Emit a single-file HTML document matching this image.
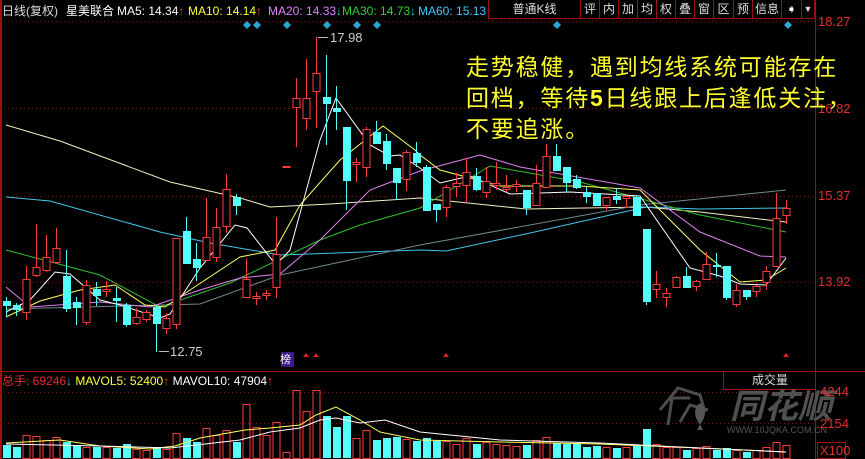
<!DOCTYPE html>
<html><head><meta charset="utf-8">
<style>
html,body{margin:0;padding:0;background:#000;width:865px;height:459px;overflow:hidden}
#s{position:absolute;left:0;top:0}
.t{position:absolute;font-family:"Liberation Sans","Noto Sans CJK SC",sans-serif;font-size:12px;white-space:nowrap;line-height:14px}
.btn{position:absolute;top:0;height:19px;border:1px solid #a01010;border-top:none;color:#ddd;font-family:"Liberation Sans","Noto Sans CJK SC",sans-serif;font-size:12px;text-align:center;line-height:19px;box-sizing:border-box}
.note{position:absolute;left:466px;color:#ffff30;font-family:"Liberation Sans","Noto Sans CJK SC",sans-serif;font-size:23px;letter-spacing:1.8px;white-space:nowrap;line-height:31px}
.ax{position:absolute;color:#e03030;font-family:"Liberation Sans",sans-serif;font-size:13px}
</style></head><body>
<svg id="s" width="865" height="459" xmlns="http://www.w3.org/2000/svg">
<rect width="865" height="459" fill="#000"/>
<line x1="1" y1="0" x2="1" y2="459" stroke="#a01010" stroke-width="2"/>
<line x1="815.5" y1="0" x2="815.5" y2="459" stroke="#a01010"/>
<line x1="0" y1="21.5" x2="815" y2="21.5" stroke="#8a1010" stroke-dasharray="1,3"/>
<g stroke="#8a1010" stroke-dasharray="1,3">
<line x1="0" y1="108.5" x2="815" y2="108.5"/>
<line x1="0" y1="196.5" x2="815" y2="196.5"/>
<line x1="0" y1="282.5" x2="815" y2="282.5"/>
<line x1="0" y1="392.5" x2="815" y2="392.5"/>
<line x1="0" y1="423.5" x2="815" y2="423.5"/>
</g>
<line x1="0" y1="371.5" x2="865" y2="371.5" stroke="#a01010"/>
<rect x="723.5" y="371.5" width="92" height="18" fill="none" stroke="#a01010"/>
<rect x="817.5" y="442.5" width="28" height="16" fill="none" stroke="#a01010"/>
<!-- watermark -->
<g fill="none" stroke="#555" stroke-width="3" opacity="0.9">
<path d="M660 410 L678 388 L700 395 L705 412"/>
<path d="M668 425 L672 398 L690 398"/>
<path d="M680 422 L690 405 L708 410"/>
</g>
<path d="M700 425 q-10 -14 0 -22 q10 8 0 22 z M697 430 h6 l-3 -6z" fill="#555"/>
<text x="730" y="418" font-family="Liberation Sans,Noto Sans CJK SC,sans-serif" font-size="34" font-style="italic" font-weight="bold" fill="#505050">同花顺</text>
<text x="727" y="433" font-family="Liberation Sans,sans-serif" font-size="9" fill="#555">WWW.10JQKA.COM.CN</text>
<g id="ma" fill="none" stroke-width="1"></g>
<g id="cd"></g>
<g id="vol"></g>
<g id="vma" fill="none"></g>
<!-- diamonds -->
<g fill="#2aa8d8" id="dm"></g>
<!-- triangles -->
<g fill="#e02020">
<path d="M303 357 l3 -4 l3 4z"/><path d="M313 357 l3 -4 l3 4z"/><path d="M443 357 l3 -4 l3 4z"/><path d="M783 357 l3 -4 l3 4z"/>
</g>
<rect x="281" y="352" width="13" height="15" fill="#3a1a8a"/>
<line x1="157.5" y1="352" x2="157.5" y2="352" stroke="#aaa"/>
<line x1="159" y1="351.5" x2="169" y2="351.5" stroke="#bbb"/>
<line x1="318" y1="37.5" x2="328" y2="37.5" stroke="#bbb"/>
</svg>
<div class="t" style="left:280px;top:353px;color:#fff;font-size:11px">榜</div>
<div class="t" style="left:170px;top:345px;color:#ccc;font-size:13px">12.75</div>
<div class="t" style="left:330px;top:31px;color:#ccc;font-size:13px">17.98</div>

<div class="t" style="left:2px;top:4px;color:#ddd">日线(复权)</div>
<div class="t" style="left:66px;top:4px;color:#fff">星美联合</div>
<div class="t" style="left:117px;top:4px;color:#fff">MA5: 14.34<span style="color:#f33">↑</span></div>
<div class="t" style="left:188px;top:4px;color:#ffff40">MA10: 14.14<span style="color:#f33">↑</span></div>
<div class="t" style="left:268px;top:4px;color:#e080ff">MA20: 14.33<span style="color:#3cc">↓</span></div>
<div class="t" style="left:342px;top:4px;color:#30d030">MA30: 14.73<span style="color:#3cc">↓</span></div>
<div class="t" style="left:418px;top:4px;color:#40c8ff">MA60: 15.13<span style="color:#f33">↑</span></div>

<div class="btn" style="left:488px;width:93px">普通K线</div>
<div class="btn" style="left:580px;width:20px">评</div>
<div class="btn" style="left:599px;width:20px">内</div>
<div class="btn" style="left:618px;width:20px">加</div>
<div class="btn" style="left:637px;width:20px">均</div>
<div class="btn" style="left:656px;width:20px">权</div>
<div class="btn" style="left:675px;width:20px">叠</div>
<div class="btn" style="left:694px;width:20px">窗</div>
<div class="btn" style="left:713px;width:21px">区</div>
<div class="btn" style="left:733px;width:20px">预</div>
<div class="btn" style="left:752px;width:30px">信息</div>
<div class="btn" style="left:781px;width:21px;color:#fff">➧</div>
<div class="btn" style="left:801px;width:14px;border-left:1px solid #a01010;font-size:9px">▼</div>

<div class="ax" style="left:818px;top:14px">18.27</div>
<div class="ax" style="left:818px;top:101px">16.82</div>
<div class="ax" style="left:818px;top:188px">15.37</div>
<div class="ax" style="left:818px;top:274px">13.92</div>
<div class="ax" style="left:820px;top:384px">4244</div>
<div class="ax" style="left:820px;top:416px">2154</div>
<div class="ax" style="left:820px;top:443px">X100</div>

<div class="note" style="top:52px">走势稳健，遇到均线系统可能存在</div>
<div class="note" style="top:83px">回档，等待<b>5</b>日线跟上后逢低关注，</div>
<div class="note" style="top:114px">不要追涨。</div>

<div class="t" style="left:2px;top:374px;color:#e03030">总手: 69246<span style="color:#3cc">↓</span> <span style="color:#ffff40">MAVOL5: 52400</span><span style="color:#f33">↑</span> <span style="color:#fff">MAVOL10: 47904</span><span style="color:#f33">↑</span></div>
<div class="t" style="left:752px;top:373px;color:#ddd">成交量</div>

<script>
var NS="http://www.w3.org/2000/svg";
function el(p,n,a){var e=document.createElementNS(NS,n);for(var k in a)e.setAttribute(k,a[k]);p.appendChild(e);return e;}
var C=[[6,301,305,297,317,'c'],[16,305,309,303,316,'c'],[26,279,312,266,320,'r'],[36,267,275,224,277,'r'],[46,257,270,235,272,'r'],[56,248,262,228,264,'r'],[66,276,308,250,312,'c'],[76,302,307,297,325,'c'],[86,285,322,280,325,'r'],[96,289,295,282,306,'c'],[106,289,291,281,297,'r'],[116,298,300,287,322,'c'],[126,305,324,303,327,'c'],[136,317,323,308,325,'r'],[146,312,319,310,322,'r'],[156,307,323,305,352,'c'],[166,318,328,313,334,'r'],[176,238,324,238,329,'r'],[186,231,263,217,263,'c'],[196,259,267,243,281,'c'],[206,237,260,198,260,'r'],[216,227,257,208,262,'r'],[226,189,226,174,233,'r'],[236,197,205,194,215,'c'],[246,279,297,259,297,'r'],[256,296,298,292,305,'r'],[266,293,295,290,300,'r'],[276,254,287,217,298,'r'],[286,166,167,166,167,'r'],[296,98,107,78,147,'r'],[306,98,118,59,130,'r'],[316,73,91,37,128,'r'],[326,97,103,55,145,'c'],[336,108,111,86,130,'c'],[346,127,180,127,210,'c'],[356,162,164,158,182,'r'],[366,129,167,127,177,'r'],[376,132,143,121,143,'c'],[386,141,163,134,170,'c'],[396,168,182,168,200,'c'],[406,152,179,150,191,'r'],[416,153,162,142,167,'c'],[426,167,210,165,210,'c'],[436,204,209,204,222,'c'],[446,187,207,185,217,'r'],[456,183,186,173,197,'r'],[466,172,185,158,202,'r'],[476,176,189,168,191,'c'],[486,181,192,167,198,'r'],[496,183,185,162,190,'r'],[506,187,189,175,192,'r'],[516,184,186,180,192,'r'],[526,190,207,190,215,'c'],[536,183,205,165,205,'r'],[546,156,187,144,187,'r'],[556,156,170,144,170,'c'],[566,167,182,167,192,'c'],[576,179,187,175,189,'c'],[586,192,196,187,203,'c'],[596,193,205,193,205,'c'],[606,197,205,197,210,'r'],[616,196,199,188,204,'c'],[626,196,198,195,208,'r'],[636,197,215,195,215,'c'],[646,229,301,229,305,'c'],[656,284,289,271,298,'r'],[666,293,297,288,307,'r'],[676,277,287,276,287,'r'],[686,276,287,267,288,'c'],[696,281,286,280,291,'r'],[706,264,279,252,280,'r'],[716,265,266,253,277,'c'],[726,266,297,266,300,'c'],[736,290,304,284,307,'r'],[746,290,296,290,300,'c'],[756,286,291,285,297,'r'],[766,271,282,266,290,'r'],[776,218,266,193,266,'r'],[786,208,215,200,224,'r']];
var V=[13,11,23,22,18,21,16,12,11,11,11,10,14,9,8,11,9,25,20,16,30,23,28,16,54,31,23,36,6,68,47,68,42,31,42,20,28,18,20,21,19,17,20,17,17,14,20,14,16,14,13,12,13,18,21,15,14,14,11,12,11,10,11,12,29,14,11,11,8,10,12,8,10,8,6,8,11,16,13];
var RED="#ff3a3a",CY="#54fcfc";
var cd=document.getElementById('cd'),vol=document.getElementById('vol');
C.forEach(function(c,i){
 var x=c[0],col=c[5]=='r'?RED:CY;
 el(cd,'line',{x1:x+.5,y1:c[3],x2:x+.5,y2:c[4],stroke:col});
 var h=Math.max(1,c[2]-c[1]);
 if(c[5]=='r') el(cd,'rect',{x:x-3,y:c[1]+.5,width:7,height:h,fill:'#000',stroke:col});
 else el(cd,'rect',{x:x-3,y:c[1],width:8,height:h+1,fill:col});
 var v=V[i];
 if(c[5]=='r') el(vol,'rect',{x:x-3,y:458.5-v,width:7,height:v,fill:'none',stroke:RED});
 else el(vol,'rect',{x:x-3,y:458-v,width:8,height:v,fill:CY});
});
var ma=document.getElementById('ma');
function pl(g,pts,col){el(g,'polyline',{points:pts,stroke:col,fill:'none'});}
pl(ma,"6,125 60,141 170,182 240,198 270,207 330,204 420,198 526,209 646,207 700,212 786,222","#f0f0c0");
pl(ma,"6,197 50,201 160,232 210,243 280,255 420,250 446,251 530,233 646,207 700,209 786,208","#40c8e8");
pl(ma,"6,309 200,304 280,275 420,245 640,205 786,190","#708890");
pl(ma,"6,250 100,275 160,307 230,283 320,240 360,225 420,208 490,166 580,182 700,215 786,232","#30c030");
pl(ma,"6,287 30,307 100,302 150,307 200,290 240,278 280,274 320,240 370,190 420,171 480,155 520,167 640,188 700,232 760,256 786,257","#e080f0");
pl(ma,"6,317 40,301 80,290 115,285 145,305 165,307 190,290 240,257 275,250 300,205 340,160 383,126 415,150 420,155 440,170 500,186 580,186 640,190 700,250 740,282 766,280 786,268","#ffff60");
pl(ma,"6,312 30,300 55,272 70,274 100,300 120,305 160,318 170,314 200,268 235,225 247,228 276,265 290,250 320,140 336,98 370,145 390,156 400,155 420,168 440,183 470,176 510,194 570,192 640,196 690,268 720,276 740,284 766,285 786,258","#ffffff");
var vm=document.getElementById('vma');
pl(vm,"6,443 60,440 100,446 150,449 175,446 200,438 245,430 270,428 300,425 316,415 336,407 360,420 380,432 420,440 500,442 600,444 700,448 786,452","#ffff60");
pl(vm,"6,444 100,446 170,448 240,440 270,432 300,428 320,420 336,418 360,423 385,420 420,432 500,440 600,443 700,448 786,452","#ffffff");
var dm=document.getElementById('dm');
[247,257,287,327,357,377,557,788].forEach(function(x){el(dm,'path',{d:'M'+x+' 21 l4 4 l-4 4 l-4 -4z'});});
</script>
</body></html>
